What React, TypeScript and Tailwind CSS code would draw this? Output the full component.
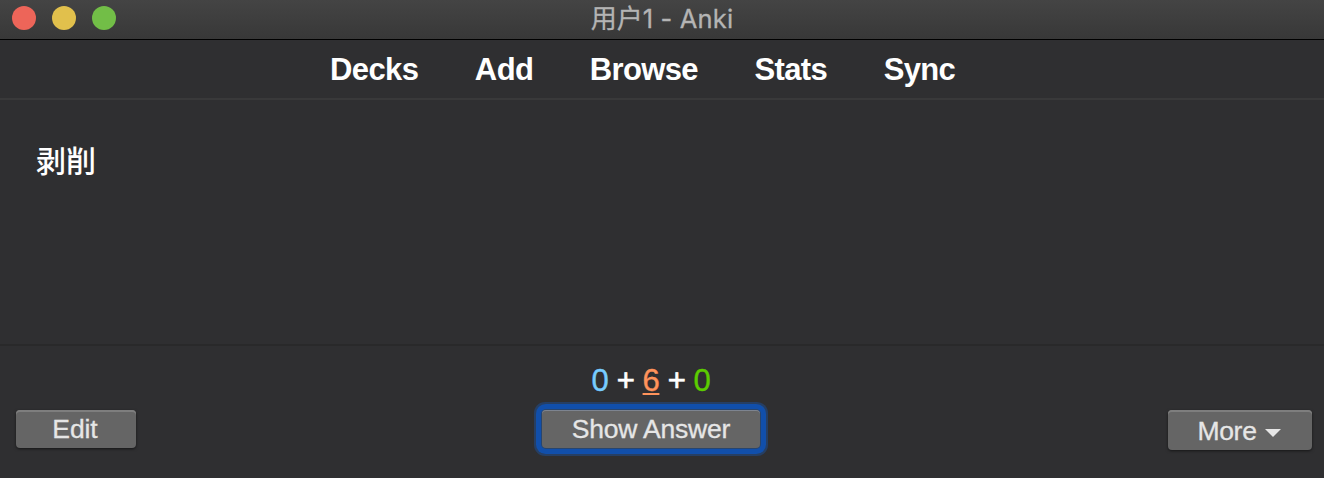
const links = [
  { label: 'Decks', tracking: 'tracking-[-0.6px]' },
  { label: 'Add', tracking: 'tracking-[-0.6px]' },
  { label: 'Browse', tracking: 'tracking-[-0.65px]' },
  { label: 'Stats', tracking: 'tracking-[-0.6px]' },
  { label: 'Sync', tracking: 'tracking-[-0.7px]' },
];

const buttonBase =
  'flex items-center justify-center rounded-[4px] bg-[#656565] leading-[38px] text-[#e6e6e6] [-webkit-text-stroke:0.3px_#e6e6e6]';
const raised = 'shadow-[inset_0_2px_0_#7e7e7e,0_1px_3px_rgba(0,0,0,0.55)]';

export default function App() {
  return (
    <div className="flex h-[478px] w-[1324px] flex-col overflow-hidden bg-[#2f2f31] font-['Liberation_Sans','Noto_Sans_CJK_SC',sans-serif]">
      <header className="grid h-10 shrink-0 grid-cols-[1fr_auto_1fr] items-center border-b border-black bg-linear-to-b from-[#444444] to-[#383838]">
        <div className="flex gap-4 self-start pt-[6px] pl-3">
          <span className="size-6 rounded-full bg-[#ed6559]" />
          <span className="size-6 rounded-full bg-[#e1c04c]" />
          <span className="size-6 rounded-full bg-[#72be47]" />
        </div>
        <h1 className="mt-[-2px] flex text-[26px] leading-[38px] whitespace-pre text-[#b4b4b4] [-webkit-text-stroke:0.3px_#b4b4b4]">
          <span className="mt-[-2px] font-['Noto_Sans_CJK_SC',sans-serif] text-[26px]">用户</span>
          <span className="font-[Inter,sans-serif] text-[25.5px] tracking-[0.15px]">1 - Anki</span>
        </h1>
      </header>

      <nav className="flex h-[60px] shrink-0 gap-[56.5px] border-b-2 border-[#39393a] pt-[10px] pl-[330px] text-[31px] leading-[40px] font-bold text-white">
        {links.map(({ label, tracking }) => (
          <a key={label} className={tracking}>
            {label}
          </a>
        ))}
      </nav>

      <main className="h-[244px] shrink-0 pt-[37px] pl-[36px] font-['Noto_Sans_CJK_SC',sans-serif] text-[30px] leading-[44px] font-medium text-white">
        剥削
      </main>

      <footer className="grid h-[134px] shrink-0 grid-cols-[526px_auto_1fr] items-start border-t-2 border-[#29292a] pr-3 pl-4">
        <button className={`${buttonBase} ${raised} mt-[64px] h-[38px] w-[120px] pr-[2px] text-[26.5px] tracking-[-0.1px]`}>
          Edit
        </button>
        <div className="flex flex-col items-center">
          <div className="mt-[15px] h-10 text-[31px] leading-[40px] tracking-[-0.4px] whitespace-pre text-white">
            <span className="text-[#77ccff] [-webkit-text-stroke:0.4px_#77ccff]">0</span>
            <span className="[-webkit-text-stroke:0.7px_white]"> + </span>
            <span className="text-[#ff935b] underline decoration-2 underline-offset-[2px] [-webkit-text-stroke:0.4px_#ff935b]">6</span>
            <span className="[-webkit-text-stroke:0.7px_white]"> + </span>
            <span className="text-[#5ccc00] [-webkit-text-stroke:0.4px_#5ccc00]">0</span>
          </div>
          <button
            className={`${buttonBase} mt-[9px] h-[38px] w-[218px] text-[26.5px] tracking-[-0.2px] shadow-[inset_0_1px_0_#7d8490,0_0_0_1px_#27456f,0_0_0_6px_#114fab,0_0_0_8px_#263f64]`}
          >
            Show Answer
          </button>
        </div>
        <button className={`${buttonBase} ${raised} mt-[64px] h-[40px] w-[144px] justify-self-end gap-2 pr-[2px] text-[26.5px] tracking-[-0.3px]`}>
          <span className="pt-[2px]">More</span>
          <svg className="mt-[6px] h-2 w-4" viewBox="0 0 16 8" fill="#e6e6e6">
            <path d="M0 0H16L8 8Z" />
          </svg>
        </button>
      </footer>
    </div>
  );
}
